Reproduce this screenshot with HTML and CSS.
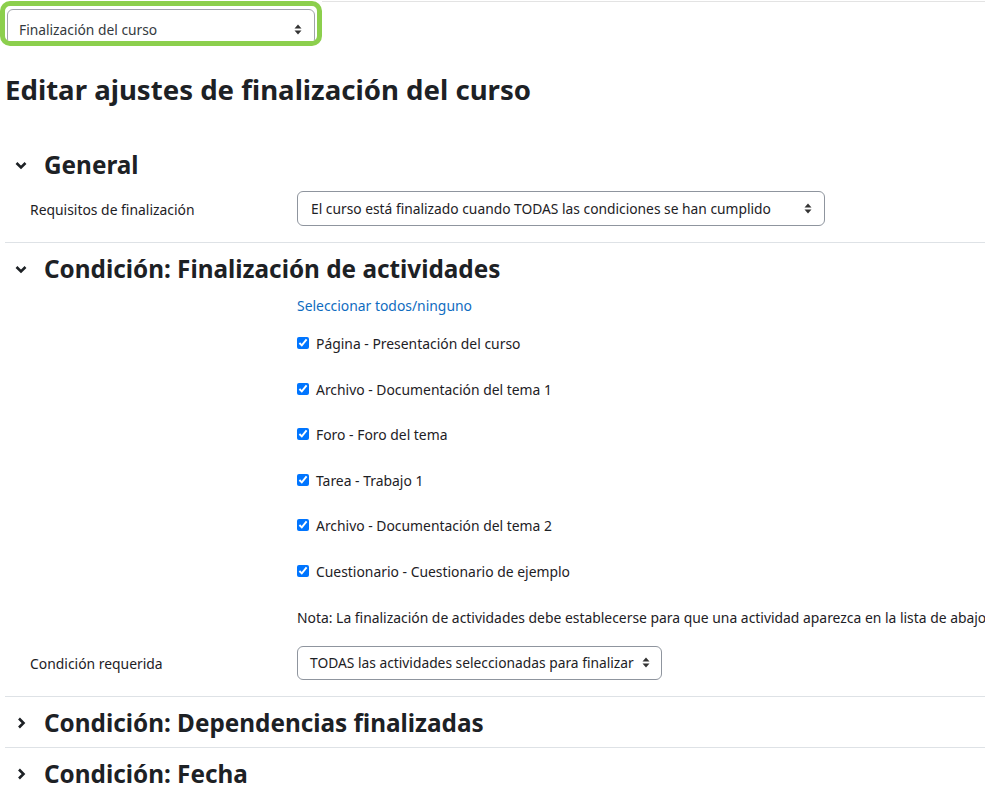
FILE: index.html
```html
<!DOCTYPE html>
<html lang="es">
<head>
<meta charset="utf-8">
<title>Editar ajustes de finalización del curso</title>
<link rel="stylesheet" href="styles.css">
</head>
<body>
<div class="topbar">
  <div class="highlight">
    <div class="select select-top">
      <span>Finalización del curso</span>
      <svg class="arrows" width="8" height="11" viewBox="0 0 8 11"><path d="M4 0.5 L7.5 4.5 H0.5 Z M4 10.5 L7.5 6.5 H0.5 Z" fill="#333"/></svg>
    </div>
  </div>
  <div class="topline"></div>
</div>

<h2 class="page-title">Editar ajustes de finalización del curso</h2>

<section class="sec">
  <h3 class="sec-head">
    <svg class="chev" width="14" height="14" viewBox="0 0 14 14"><polyline points="2.5,5 7,9.5 11.5,5" fill="none" stroke="#1d2125" stroke-width="2.6"/></svg>
    General
  </h3>
  <div class="row row-first">
    <div class="label">Requisitos de finalización</div>
    <div class="select select-wide">
      <span>El curso está finalizado cuando TODAS las condiciones se han cumplido</span>
      <svg class="arrows" width="8" height="11" viewBox="0 0 8 11"><path d="M4 0.5 L7.5 4.5 H0.5 Z M4 10.5 L7.5 6.5 H0.5 Z" fill="#333"/></svg>
    </div>
  </div>
</section>

<section class="sec">
  <h3 class="sec-head">
    <svg class="chev" width="14" height="14" viewBox="0 0 14 14"><polyline points="2.5,5 7,9.5 11.5,5" fill="none" stroke="#1d2125" stroke-width="2.6"/></svg>
    Condición: Finalización de actividades
  </h3>
  <div class="activities">
    <a class="link" href="#">Seleccionar todos/ninguno</a>
    <label class="check"><input type="checkbox" checked> Página - Presentación del curso</label>
    <label class="check"><input type="checkbox" checked> Archivo - Documentación del tema 1</label>
    <label class="check"><input type="checkbox" checked> Foro - Foro del tema</label>
    <label class="check"><input type="checkbox" checked> Tarea - Trabajo 1</label>
    <label class="check"><input type="checkbox" checked> Archivo - Documentación del tema 2</label>
    <label class="check"><input type="checkbox" checked> Cuestionario - Cuestionario de ejemplo</label>
    <div class="note">Nota: La finalización de actividades debe establecerse para que una actividad aparezca en la lista de abajo</div>
  </div>
  <div class="row">
    <div class="label">Condición requerida</div>
    <div class="select select-mid">
      <span>TODAS las actividades seleccionadas para finalizar</span>
      <svg class="arrows" width="8" height="11" viewBox="0 0 8 11"><path d="M4 0.5 L7.5 4.5 H0.5 Z M4 10.5 L7.5 6.5 H0.5 Z" fill="#333"/></svg>
    </div>
  </div>
</section>

<section class="sec collapsed">
  <h3 class="sec-head">
    <svg class="chev" width="14" height="14" viewBox="0 0 14 14"><polyline points="5,2.5 9.5,7 5,11.5" fill="none" stroke="#1d2125" stroke-width="2.6"/></svg>
    Condición: Dependencias finalizadas
  </h3>
</section>

<section class="sec collapsed last">
  <h3 class="sec-head">
    <svg class="chev" width="14" height="14" viewBox="0 0 14 14"><polyline points="5,2.5 9.5,7 5,11.5" fill="none" stroke="#1d2125" stroke-width="2.6"/></svg>
    Condición: Fecha
  </h3>
</section>
</body>
</html>
```
FILE: styles.css
```css
html, body {
  margin: 0;
  padding: 0;
  background: #fff;
}
body {
  font-family: "Noto Sans", "Open Sans", sans-serif;
  font-size: 13.9px;
  color: #1d2125;
  overflow: hidden;
}

.topbar {
  display: flex;
  padding-top: 1px;
}
.highlight {
  border: 5px solid #8ccf4d;
  border-radius: 10px;
  padding: 3px 2px 0 2px;
  box-sizing: border-box;
  width: 322px;
  height: 45px;
  overflow: hidden;
}
.topline {
  flex: 1;
  border-top: 1px solid #e3e3e3;
}

.select {
  display: flex;
  align-items: center;
  justify-content: space-between;
  box-sizing: border-box;
  border: 1px solid #8f959e;
  border-radius: 6px;
  padding: 0 12px 0 12px;
  color: #1d2125;
  background: #fff;
  font-size: 13.8px;
  white-space: nowrap;
}
.select-top {
  flex: none;
  height: 36px;
  padding: 4px 12px 0 11px;
  color: #343a40;
  border-color: #a0a4aa;
}
.select-wide {
  width: 528px;
  height: 35px;
  padding-left: 13px;
}
.select-mid {
  width: 365px;
  height: 34px;
  padding-right: 11px;
}
.arrows { flex: none; }

.page-title {
  margin: 0;
  padding: 0 0 0 5px;
  font-size: 27.6px;
  line-height: 36px;
  font-weight: 700;
  margin-top: 25px;
  margin-bottom: 32px;
}

.sec {
  margin-left: 5px;
  border-bottom: 1px solid #dee2e6;
  padding-bottom: 16px;
}
.sec.collapsed { padding-bottom: 0; }
.sec.last { border-bottom: none; }

.sec-head {
  display: flex;
  align-items: center;
  margin: 0;
  padding: 10px 0 8px 0;
  height: 32px;
  box-sizing: content-box;
  font-size: 24.3px;
  font-weight: 700;
  line-height: 32px;
}
.chev {
  margin-left: 9px;
  margin-right: 16px;
}

.row {
  display: flex;
  align-items: center;
}
.row-first { margin-top: 2px; }
.label {
  width: 292px;
  padding-left: 25px;
  box-sizing: border-box;
  padding-top: 2px;
}

.activities {
  display: flex;
  flex-direction: column;
  align-items: flex-start;
  padding-left: 292px;
  padding-top: 2px;
  margin-bottom: 17px;
}
.link {
  color: #0f6cbf;
  text-decoration: none;
  line-height: 22px;
  margin-bottom: 16px;
}
.check {
  display: flex;
  align-items: center;
  line-height: 22px;
  height: 22px;
  margin-bottom: 23.6px;
}
.check input {
  margin: 0 7px 0 0;
  width: 12px;
  height: 12px;
  accent-color: #0075ff;
  position: relative;
  top: -1px;
}
.note {
  line-height: 22px;
  white-space: nowrap;
}
```
